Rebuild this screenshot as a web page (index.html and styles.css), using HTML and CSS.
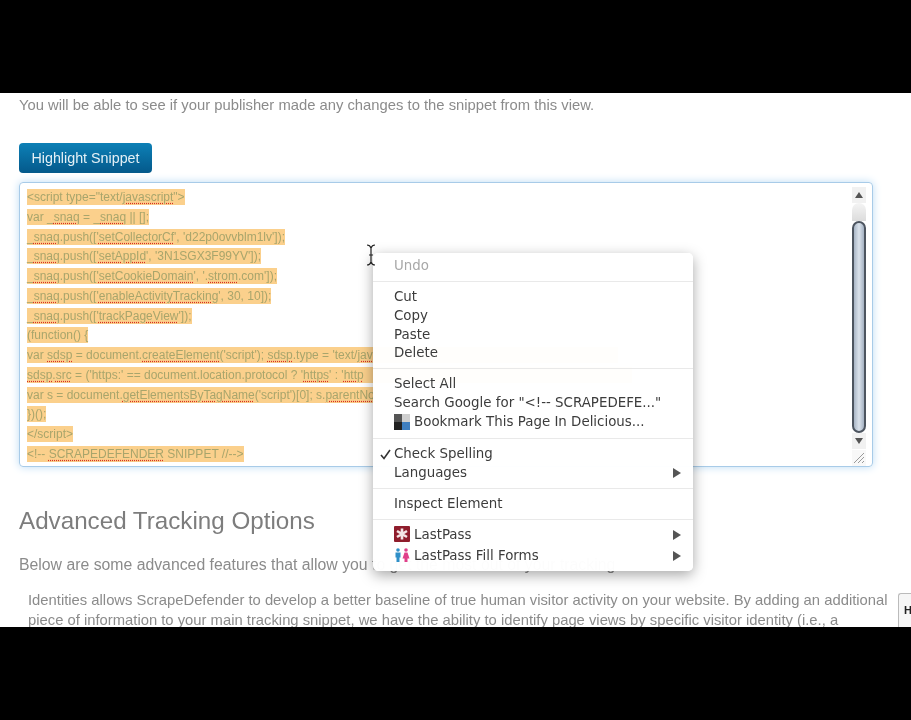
FILE: index.html
```html
<!DOCTYPE html>
<html lang="en">
<head>
  <meta charset="UTF-8">
  <title>Tracking Snippet</title>
  <meta name="viewport" content="width=device-width, initial-scale=1.0">
  <link rel="stylesheet" href="styles.css">
</head>
<body>
  <div class="bar-top"></div>
  <main class="page">
    <p class="intro">You will be able to see if your publisher made any changes to the snippet from this view.</p>
    <button class="btn-highlight">Highlight Snippet</button>

    <div class="snippet-box">
      <div class="code">
        <div class="line"><span class="hl">&lt;script type="text/<u>javascript</u>"&gt;</span></div>
        <div class="line"><span class="hl">var _<u>snaq</u> = _<u>snaq</u> || [];</span></div>
        <div class="line"><span class="hl">_<u>snaq</u>.push(['<u>setCollectorCf</u>', 'd22p0ovvblm1lv']);</span></div>
        <div class="line"><span class="hl">_<u>snaq</u>.push(['<u>setAppId</u>', '3N1SGX3F99YV']);</span></div>
        <div class="line"><span class="hl">_<u>snaq</u>.push(['<u>setCookieDomain</u>', '.<u>strom</u>.com']);</span></div>
        <div class="line"><span class="hl">_<u>snaq</u>.push(['<u>enableActivityTracking</u>', 30, 10]);</span></div>
        <div class="line"><span class="hl">_<u>snaq</u>.push(['<u>trackPageView</u>']);</span></div>
        <div class="line"><span class="hl">(function() {</span></div>
        <div class="line"><span class="hl g1">var <u>sdsp</u> = document.<u>createElement</u>('script'); <u>sdsp</u>.type = 'text/<u>jav</u></span></div>
        <div class="line"><span class="hl g2"><u>sdsp</u>.<u>src</u> = ('https:' == document.location.protocol ? '<u>https</u>' : '<u>http</u></span></div>
        <div class="line"><span class="hl">var s = document.<u>getElementsByTagName</u>('script')[0]; s.<u>parentNo</u></span></div>
        <div class="line"><span class="hl">})();</span></div>
        <div class="line"><span class="hl">&lt;/script&gt;</span></div>
        <div class="line"><span class="hl">&lt;!-- <u>SCRAPEDEFENDER</u> SNIPPET //--&gt;</span></div>
      </div>
      <div class="scroll">
        <div class="scroll-up"><span class="arrow-up"></span></div>
        <div class="scroll-gap"></div>
        <div class="scroll-thumb"></div>
        <div class="scroll-down"><span class="arrow-down"></span></div>
        <div class="resizer">
          <svg width="14" height="14" viewBox="0 0 14 14"><path d="M2 13 L12 3 M6 13 L12 7 M10 13 L12 11" stroke="#9a9a9a" stroke-width="1" fill="none"/></svg>
        </div>
      </div>
    </div>

    <h2 class="section-title">Advanced Tracking Options</h2>
    <p class="lead">Below are some advanced features that allow you to get the most out of your tracking</p>
    <p class="detail">Identities allows ScrapeDefender to develop a better baseline of true human visitor activity on your website. By adding an additional piece of information to your main tracking snippet, we have the ability to identify page views by specific visitor identity (i.e., a</p>

    <div class="side-tab">H</div>

    <!-- text cursor -->
    <svg class="ibeam" width="10" height="22" viewBox="0 0 10 22"><path d="M1 1 Q4 1 5 4 L5 18 Q4 21 1 21 M9 1 Q6 1 5 4 M5 18 Q6 21 9 21 M3 11 H7" stroke="#222" stroke-width="1.2" fill="none"/></svg>

    <!-- Context menu -->
    <div class="menu">
      <div class="item disabled">Undo</div>
      <div class="sep"></div>
      <div class="item">Cut</div>
      <div class="item">Copy</div>
      <div class="item">Paste</div>
      <div class="item">Delete</div>
      <div class="sep"></div>
      <div class="item">Select All</div>
      <div class="item">Search Google for "&lt;!-- SCRAPEDEFE..."</div>
      <div class="item with-icon">
        <svg class="icon" width="16" height="16" viewBox="0 0 16 16"><rect width="8" height="8" fill="#555"/><rect x="8" width="8" height="8" fill="#cfcfcf"/><rect y="8" width="8" height="8" fill="#222"/><rect x="8" y="8" width="8" height="8" fill="#3f7fc0"/></svg>
        Bookmark This Page In Delicious...
      </div>
      <div class="sep"></div>
      <div class="item"><svg class="check" width="11" height="11" viewBox="0 0 11 11"><path d="M1 6 L4 9.5 L10 1" stroke="#333" stroke-width="1.6" fill="none"/></svg>Check Spelling</div>
      <div class="item">Languages<span class="sub"></span></div>
      <div class="sep"></div>
      <div class="item">Inspect Element</div>
      <div class="sep"></div>
      <div class="item with-icon tall">
        <svg class="icon" width="16" height="16" viewBox="0 0 16 16"><rect width="16" height="16" rx="1" fill="#8f1d2c"/><path d="M8 2.5 V13.5 M3 5 L13 11 M13 5 L3 11" stroke="#f4e6e6" stroke-width="2.6"/></svg>
        LastPass<span class="sub"></span>
      </div>
      <div class="item with-icon tall">
        <svg class="icon" width="16" height="16" viewBox="0 0 16 16"><circle cx="4" cy="3" r="1.8" fill="#2f8fc8"/><path d="M1.5 5.5 H6.5 V10.5 H5.5 V15 H2.5 V10.5 H1.5 Z" fill="#2f8fc8"/><circle cx="12" cy="3" r="1.8" fill="#e0408a"/><path d="M10.5 5.5 H13.5 L15.5 11.5 H13.5 V15 H10.5 V11.5 H8.5 Z" fill="#e0408a"/></svg>
        LastPass Fill Forms<span class="sub"></span>
      </div>
    </div>
  </main>
  <div class="bar-bottom"></div>
</body>
</html>
```

FILE: styles.css
```css
html, body { margin: 0; height: 720px; overflow: hidden; background: #000; }
body { display: flex; flex-direction: column; font-family: "Liberation Sans", Arial, sans-serif; }
.bar-top { height: 93px; background: #000; }
.bar-bottom { flex: 1; background: #000; }

.page { position: relative; height: 534px; overflow: hidden; background: #fff; padding: 0 19px; box-sizing: border-box; filter: blur(0.5px); }
.intro { margin: 3.5px 0 0; font-size: 14.8px; line-height: 17px; color: #8b8b8b; }
.btn-highlight { display: block; margin-top: 29.5px; width: 133px; height: 30px; padding: 0; border: none; border-radius: 4px; background: linear-gradient(#0d80b6, #04598b); color: #e4f0f6; font: 14.3px "Liberation Sans", Arial, sans-serif; }

/* Snippet box */
.snippet-box { display: flex; margin-top: 9px; width: 854px; height: 285px; box-sizing: border-box; border: 1px solid #a8cbe8; border-radius: 4px; box-shadow: 0 0 8px #bcdcf5; overflow: hidden; }
.code { flex: 1; min-width: 0; padding: 5px 0 0 7px; overflow: hidden; }
.line { height: 19.75px; line-height: 19.75px; font-size: 12px; white-space: nowrap; color: #a8a56c; }
.hl { background: #fbd08c; padding: 1px 0; }
.hl u { text-decoration: underline dotted #d92f25; text-underline-offset: 2px; }
.g1 { padding-right: 245px; }
.g2 { padding-right: 268px; }

.scroll { width: 14px; margin-right: 6px; padding-top: 4px; display: flex; flex-direction: column; }
.scroll-up { height: 16px; background: #f1f1f1; display: flex; justify-content: center; align-items: center; }
.scroll-gap { height: 18px; background: linear-gradient(#f4f4f4, #dcdcdc); border-radius: 7px 7px 0 0; }
.scroll-thumb { height: 212px; box-sizing: border-box; border: 2px solid #4d5560; border-radius: 7px; background: linear-gradient(90deg, #a9b6c6, #dbe3ec 50%, #a4b1c2); }
.scroll-down { height: 16px; background: #f1f1f1; display: flex; justify-content: center; align-items: center; }
.arrow-up { border: 4px solid transparent; border-top: 0; border-bottom: 6px solid #555; }
.arrow-down { border: 4px solid transparent; border-bottom: 0; border-top: 6px solid #555; }
.resizer { height: 16px; margin-top: 1px; background: #f8f8f8; }
.resizer svg { display: block; }

.section-title { margin: 40px 0 0; font-size: 24.2px; line-height: 28px; font-weight: normal; color: #7d7d7d; }
.lead { margin: 20.5px 0 0; font-size: 15.8px; line-height: 17px; color: #8b8b8b; white-space: nowrap; }
.detail { margin: 17px 0 0 9px; font-size: 14.8px; line-height: 20px; color: #8b8b8b; width: 870px; }

.side-tab { position: absolute; right: 0; top: 500px; width: 13px; height: 40px; box-sizing: border-box; border: 1px solid #bbb; border-right: 0; border-radius: 3px 0 0 0; background: #f6f6f6; padding: 10px 0 0 5px; font-size: 11px; font-weight: bold; color: #222; }
.ibeam { position: absolute; left: 366px; top: 151px; z-index: 2; }

/* Context menu */
.menu { position: absolute; left: 373px; top: 160px; width: 320px; height: 318px; box-sizing: border-box; padding-top: 3px; background: rgba(255,255,255,0.975); border-radius: 5px; box-shadow: 0 4px 14px rgba(0,0,0,0.35); font-family: "DejaVu Sans", sans-serif; font-size: 13.4px; color: #3c3c3c; }
.item { position: relative; height: 18.75px; line-height: 20.75px; padding-left: 21px; white-space: nowrap; }
.item.disabled { color: #a8a8a8; }
.item.with-icon { height: 20px; line-height: 20px; padding-left: 41px; }
.item.tall { height: 21px; line-height: 19px; }
.item.tall .icon { top: 1px; }
.sep { height: 1px; margin: 6.3px 0 5px; background: #e9e9e9; }
.icon { position: absolute; left: 21px; top: 2px; }
.check { position: absolute; left: 7px; top: 5px; }
.sub { position: absolute; right: 12px; top: 5px; border: 5px solid transparent; border-right: 0; border-left: 8px solid #555; }
```
